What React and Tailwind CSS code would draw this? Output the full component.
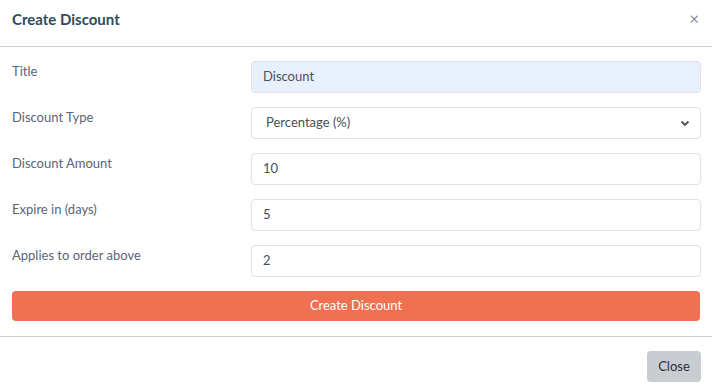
import React from "react";

const Row = ({ label, children }) => (
  <div className="flex">
    <label className="w-[239px] shrink-0 text-[13px] leading-5 text-[#5b6478]">{label}</label>
    <div className="flex-1">{children}</div>
  </div>
);

const Field = ({ value, tinted }) => (
  <div
    className={`h-[32px] rounded-[4px] border border-[#dfe3e8] px-[11px] flex items-center text-[13px] text-[#4a5058] ${
      tinted ? "bg-[#e8f0fe] text-[#1f2530]" : "bg-white"
    }`}
  >
    {value}
  </div>
);

export default function App() {
  return (
    <div className="w-[712px] h-[387px] bg-white font-['Lato','Liberation_Sans',sans-serif]">
      {/* header */}
      <div className="h-[47px] border-b border-[#cfd3d8] px-3 pt-[9px] flex justify-between">
        <h1 className="text-[15px] font-bold leading-5 text-[#2f4b5c]">Create Discount</h1>
        <span className="text-[17px] leading-5 text-[#8a8f96] pr-[1px]">×</span>
      </div>

      {/* body */}
      <div className="pl-3 pr-[11px] pt-[14px] pb-[15px] flex flex-col gap-[14px] border-b border-[#cfd3d8]">
        <Row label="Title">
          <Field value="Discount" tinted />
        </Row>
        <Row label="Discount Type">
          <div className="h-[32px] rounded-[4px] border border-[#dfe3e8] pl-[14px] pr-[10px] flex items-center justify-between text-[13px] text-[#4a5058]">
            <span>Percentage (%)</span>
            <svg width="10" height="7" viewBox="0 0 10 7" className="mt-[1px]">
              <path d="M1.5 1.5 L5 5 L8.5 1.5" fill="none" stroke="#4a5361" strokeWidth="1.8" />
            </svg>
          </div>
        </Row>
        <Row label="Discount Amount">
          <Field value="10" />
        </Row>
        <Row label="Expire in (days)">
          <Field value="5" />
        </Row>
        <Row label="Applies to order above">
          <Field value="2" />
        </Row>
        <button className="h-[30px] w-[688px] rounded-[4px] bg-[#f07052] text-white text-[13px]">
          Create Discount
        </button>
      </div>

      {/* footer */}
      <div className="flex justify-end pr-[11px] pt-[14px]">
        <button className="h-[31px] w-[54px] rounded-[4px] bg-[#c9cdd2] text-[13px] text-[#2b2f35]">
          Close
        </button>
      </div>
    </div>
  );
}
